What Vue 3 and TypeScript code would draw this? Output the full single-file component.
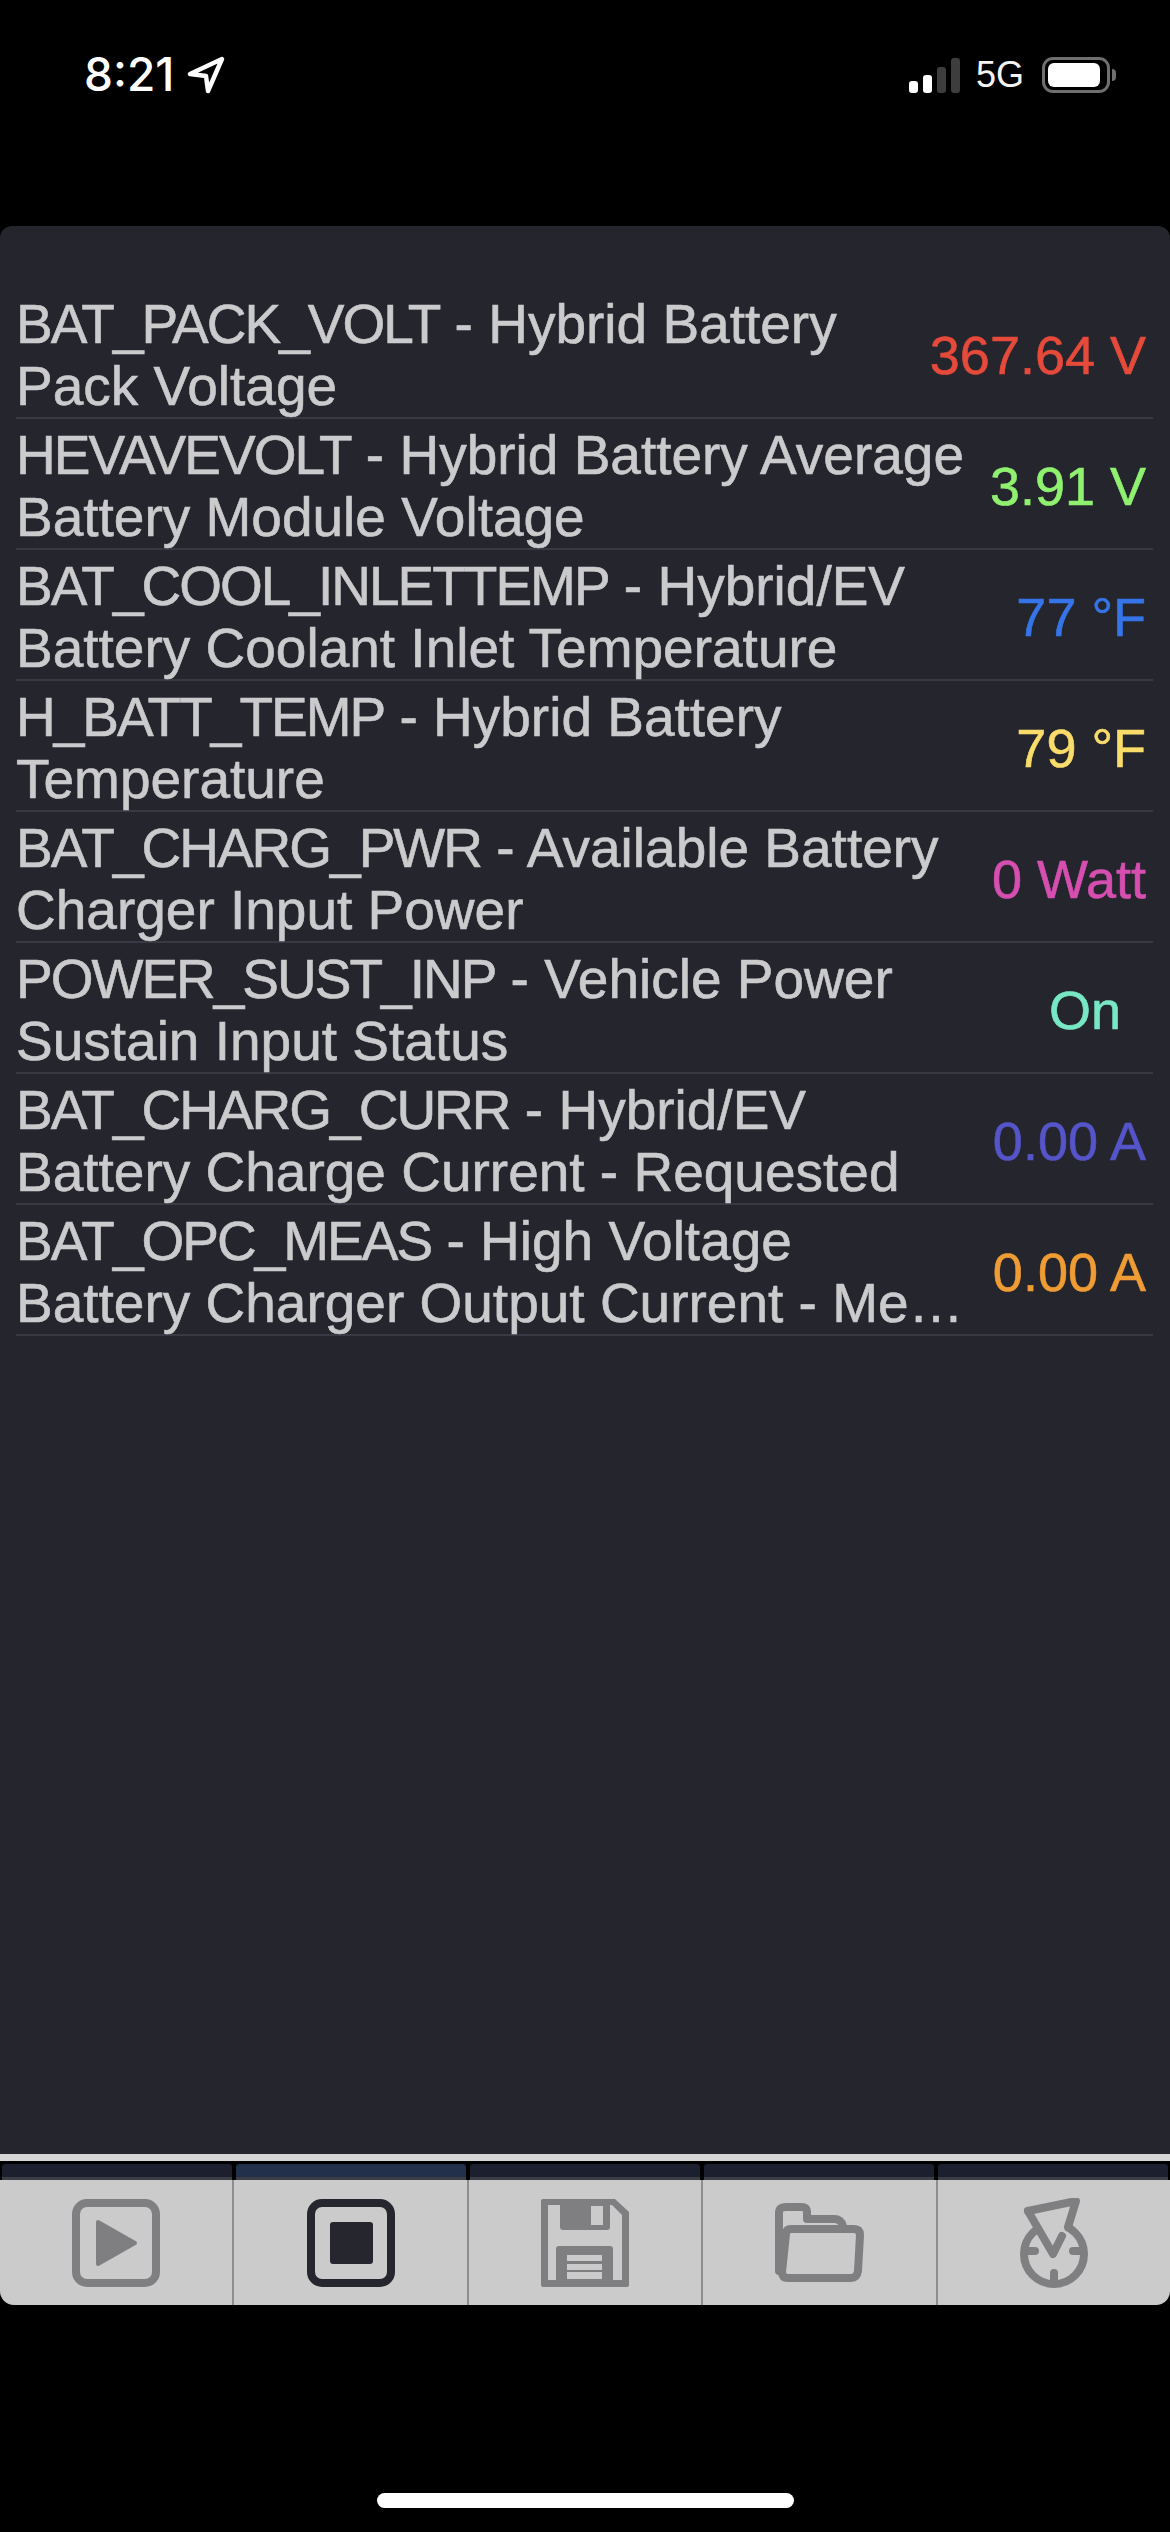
<script setup lang="ts">
interface Row { code: string; rest: string; line2: string; value: string; color: string }
const rows: Row[] = [
  { code: 'BAT_PACK_VOLT', rest: ' - Hybrid Battery', line2: 'Pack Voltage', value: '367.64 V', color: '#e54a3a' },
  { code: 'HEVAVEVOLT', rest: ' - Hybrid Battery Average', line2: 'Battery Module Voltage', value: '3.91 V', color: '#90f070' },
  { code: 'BAT_COOL_INLETTEMP', rest: ' - Hybrid/EV', line2: 'Battery Coolant Inlet Temperature', value: '77 °F', color: '#3575e8' },
  { code: 'H_BATT_TEMP', rest: ' - Hybrid Battery', line2: 'Temperature', value: '79 °F', color: '#f9dc6a' },
  { code: 'BAT_CHARG_PWR', rest: ' - Available Battery', line2: 'Charger Input Power', value: '0 Watt', color: '#d64fb0' },
  { code: 'POWER_SUST_INP', rest: ' - Vehicle Power', line2: 'Sustain Input Status', value: 'On', color: '#78e8c4' },
  { code: 'BAT_CHARG_CURR', rest: ' - Hybrid/EV', line2: 'Battery Charge Current - Requested', value: '0.00 A', color: '#5554c8' },
  { code: 'BAT_OPC_MEAS', rest: ' - High Voltage', line2: 'Battery Charger Output Current - Me…', value: '0.00 A', color: '#ef9c34' },
]
</script>

<template>
  <div class="screen">
    <header class="status">
      <div class="left">
        <span class="time">8:21</span>
        <svg class="arrow" width="38" height="38" viewBox="0 0 38 38">
          <path d="M35 3 L3 18 L19 20 L21 35 Z" fill="none" stroke="#fff" stroke-width="4.5" stroke-linejoin="round" />
        </svg>
      </div>
      <div class="right">
        <div class="signal">
          <i class="bar on b1"></i><i class="bar on b2"></i><i class="bar b3"></i><i class="bar b4"></i>
        </div>
        <span class="net">5G</span>
        <div class="battery"><div class="level"></div></div>
        <div class="nub"></div>
      </div>
    </header>

    <main class="panel">
      <div v-for="r in rows" :key="r.code" class="row">
        <div class="name">
          <div class="line"><span class="code">{{ r.code }}</span>{{ r.rest }}</div>
          <div class="line">{{ r.line2 }}</div>
        </div>
        <div class="value" :style="{ color: r.color }">{{ r.value }}</div>
      </div>
    </main>

    <div class="rule"></div>
    <div class="tabs">
      <i class="tab"></i><i class="tab active"></i><i class="tab"></i><i class="tab"></i><i class="tab"></i>
    </div>

    <nav class="toolbar">
      <div class="cell">
        <svg width="88" height="88" viewBox="0 0 88 88">
          <rect x="4" y="4" width="80" height="80" rx="11" fill="none" stroke="#7f7f82" stroke-width="8" />
          <path d="M26 23 L63 44 L26 65 Z" fill="#7f7f82" stroke="#7f7f82" stroke-width="4" stroke-linejoin="round" />
        </svg>
      </div>
      <div class="cell">
        <svg width="88" height="88" viewBox="0 0 88 88">
          <rect x="4" y="4" width="80" height="80" rx="11" fill="none" stroke="#26272e" stroke-width="8" />
          <rect x="23" y="23" width="43" height="42" rx="3" fill="#26272e" />
        </svg>
      </div>
      <div class="cell">
        <svg width="88" height="88" viewBox="0 0 88 88">
          <path d="M0 2 Q0 0 2 0 H74 L88 13 V86 Q88 88 86 88 H2 Q0 88 0 86 Z" fill="#7f7f82" />
          <path d="M7 6 H71 L81 16 V81 H7 Z" fill="#cbcbcb" />
          <rect x="19" y="0" width="50" height="31" rx="3" fill="#7f7f82" />
          <rect x="50" y="7" width="12" height="19" fill="#cbcbcb" />
          <rect x="15" y="47" width="57" height="41" rx="3" fill="#7f7f82" />
          <rect x="26" y="56" width="35" height="6" fill="#cbcbcb" />
          <rect x="26" y="65" width="35" height="6" fill="#cbcbcb" />
          <rect x="26" y="73" width="35" height="7" fill="#cbcbcb" />
        </svg>
      </div>
      <div class="cell">
        <svg width="90" height="88" viewBox="0 0 90 88">
          <g fill="none" stroke="#7f7f82" stroke-width="8" stroke-linejoin="round" stroke-linecap="round">
            <path d="M5 72 V14 Q5 8 12 8 H27 Q33 8 33 13 V20 H60 Q67 20 69 27" />
            <path d="M17 30 H80 Q86 30 86 36 L84 72 Q83 79 77 79 H14 Q8 79 8 73 L12 35 Q12 30 17 30 Z" />
          </g>
        </svg>
      </div>
      <div class="cell">
        <svg width="70" height="90" viewBox="0 0 70 90">
          <g fill="none" stroke="#7f7f82" stroke-width="8" stroke-linecap="round" stroke-linejoin="round">
            <ellipse cx="35" cy="56" rx="30" ry="30" />
            <path d="M9 13 L57 2 L48 30 L43 37 L34 56 Z" fill="#cbcbcb" stroke="none" />
            <path d="M9 13 L57 3 L49 29" />
            <path d="M9 13 L34 56 L43 38" />
            <path d="M10 53 H16 M54 53 H62 M35 75 V84" />
          </g>
        </svg>
      </div>
    </nav>

    <footer class="home"><div class="indicator"></div></footer>
  </div>
</template>

<style>
html, body { margin: 0; background: #000; }
</style>

<style scoped>
.screen {
  width: 1170px;
  height: 2532px;
  background: #000;
  display: flex;
  flex-direction: column;
  overflow: hidden;
  font-family: "Liberation Sans", Arial, sans-serif;
}
.status {
  height: 226px;
  box-sizing: border-box;
  padding: 53px 54px 0 84px;
  display: flex;
  justify-content: space-between;
  align-items: flex-start;
  color: #fff;
}
.left { display: flex; align-items: center; height: 42px; gap: 13px; }
.time { font-family: Inter, sans-serif; font-size: 46px; font-weight: 500; line-height: 42px; }
.arrow { flex: none; margin-top: 2px; }
.right { display: flex; align-items: center; height: 38px; margin-top: 3px; }
.signal { display: flex; align-items: flex-end; gap: 5px; height: 35px; }
.bar { display: block; width: 9px; background: #3d3d3d; border-radius: 3px; }
.bar.on { background: #fff; }
.b1 { height: 12px; }
.b2 { height: 18px; }
.b3 { height: 26px; }
.b4 { height: 35px; }
.net { font-size: 36px; line-height: 38px; margin-left: 16px; color: #f4f4f4; }
.battery {
  margin-left: 18px;
  width: 68px;
  height: 36px;
  box-sizing: border-box;
  border: 3px solid #6f6f6f;
  border-radius: 11px;
  padding: 3px;
}
.level { width: 52px; height: 24px; background: #fff; border-radius: 6px; }
.nub { width: 4px; height: 12px; background: #6f6f6f; border-radius: 0 4px 4px 0; margin-left: 2px; }

.panel {
  height: 1928px;
  box-sizing: border-box;
  background: #24252d;
  border-radius: 12px 12px 0 0;
  padding: 62px 17px 0 16px;
}
.row {
  height: 131px;
  box-sizing: border-box;
  display: flex;
  align-items: center;
  gap: 16px;
  border-bottom: 2px solid #383943;
  padding-top: 5px;
}
.name {
  flex: 1;
  min-width: 0;
  font-size: 55px;
  line-height: 62px;
  color: #cbcbcd;
  -webkit-text-stroke: 0.6px #cbcbcd;
}
.line { white-space: nowrap; }
.code { letter-spacing: -2px; }
.value {
  flex: none;
  min-width: 122px;
  text-align: center;
  font-size: 54px;
  line-height: 62px;
  white-space: nowrap;
  margin-right: 7px;
  -webkit-text-stroke: 0.6px currentColor;
}

.rule { height: 7px; background: #d6d6d6; flex: none; }
.tabs {
  height: 19px;
  flex: none;
  box-sizing: border-box;
  background: #000;
  padding-top: 3px;
  display: flex;
}
.tab {
  flex: 1;
  display: block;
  margin: 0 2px;
  background: #1b1f2e;
  border-bottom: 3px solid #3a3d46;
  border-radius: 3px 3px 0 0;
}
.tab.active { background: #22304c; }

.toolbar {
  height: 125px;
  flex: none;
  display: flex;
  background: #cbcbcb;
  border-radius: 0 0 14px 14px;
}
.cell {
  flex: 1;
  display: flex;
  align-items: center;
  justify-content: center;
  border-left: 2px solid #8e8e8e;
}
.cell:first-child { border-left: 0; }

.home {
  flex: 1;
  display: flex;
  justify-content: center;
  padding-top: 188px;
}
.indicator { width: 417px; height: 15px; background: #fff; border-radius: 8px; }
</style>
